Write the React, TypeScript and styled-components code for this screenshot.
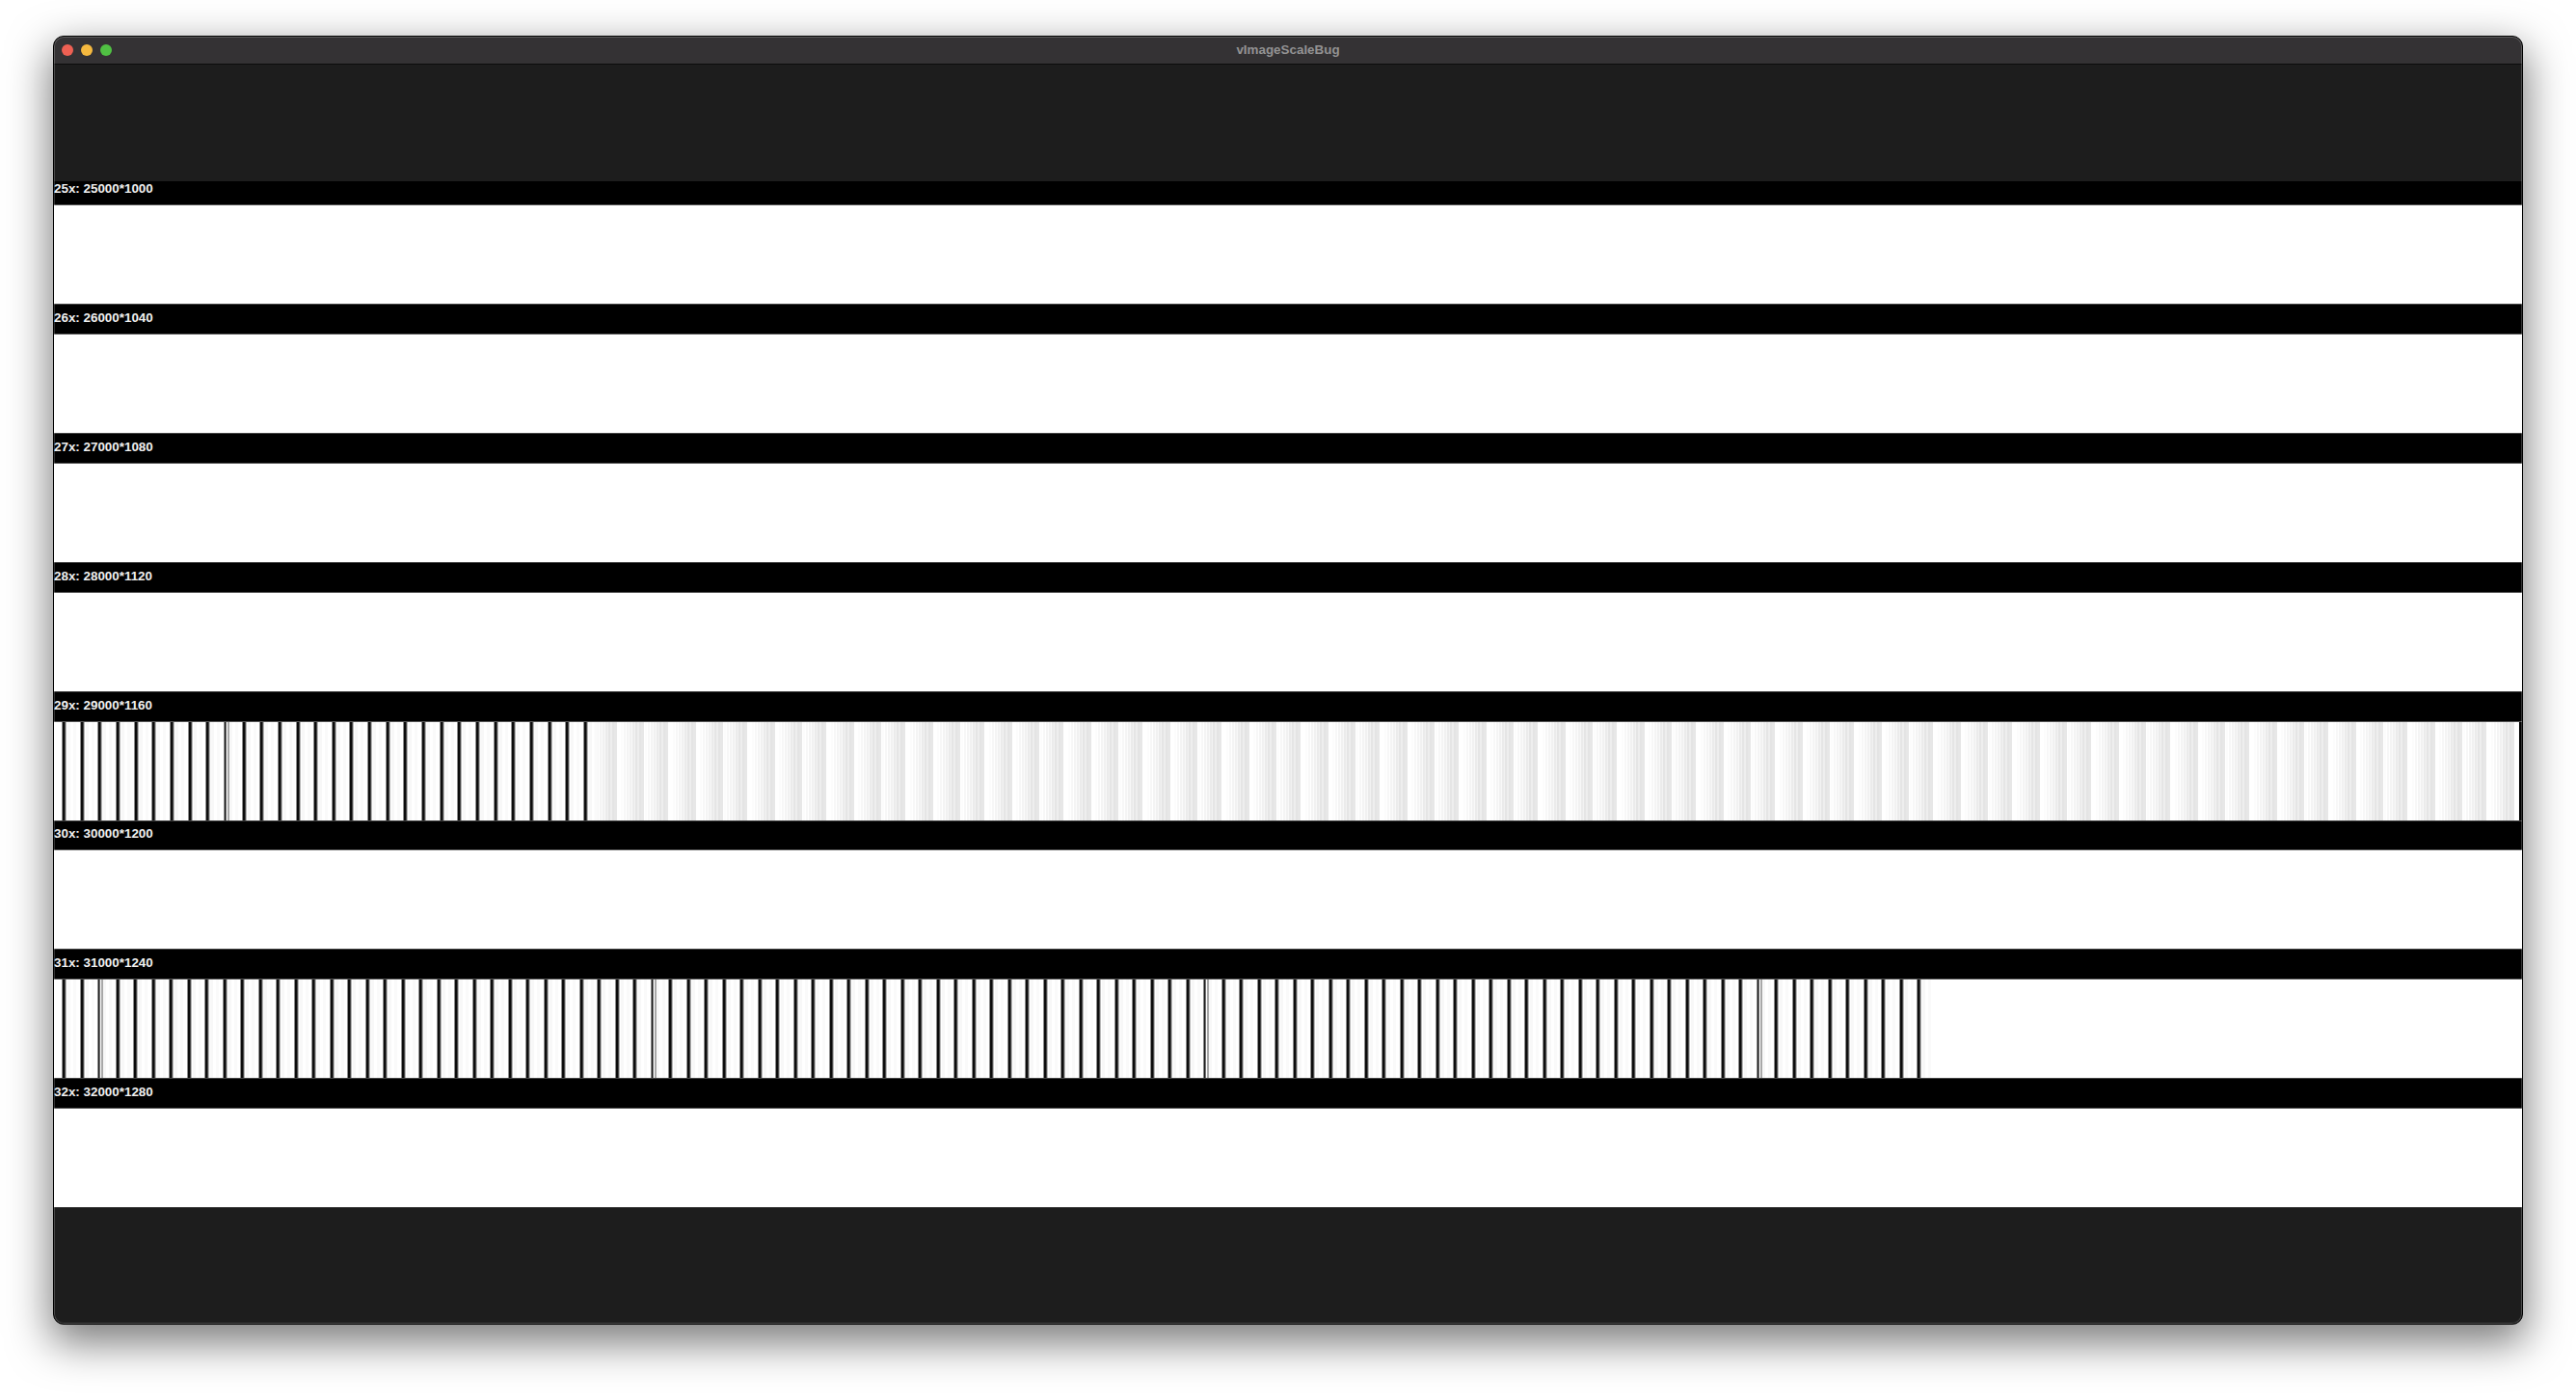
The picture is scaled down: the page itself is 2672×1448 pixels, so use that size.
import React from "react";
import styled, { createGlobalStyle } from "styled-components";

const Global = createGlobalStyle`
  html, body { margin: 0; padding: 0; background: #fff; overflow: hidden; }
  body { font-family: "Liberation Sans", Arial, sans-serif; }
`;

const Page = styled.div`
  width: 2672px;
  height: 1448px;
  padding: 37px 55px 0;
  box-sizing: border-box;
`;

const Window = styled.div`
  position: relative;
  width: 2562px;
  height: 1337px;
  box-sizing: border-box;
  border: 1px solid #000;
  border-radius: 11px;
  background: #1d1d1d;
  overflow: hidden;
  box-shadow: 0 16px 44px 3px rgba(0, 0, 0, 0.52);
  display: flex;
  flex-direction: column;
`;

const Rim = styled.div`
  position: absolute;
  inset: 0;
  border-radius: 10px;
  pointer-events: none;
  box-shadow: inset 0 0 0 1px rgba(255, 255, 255, 0.2);
`;

const TitleBar = styled.header`
  height: 29px;
  flex: none;
  box-sizing: border-box;
  display: grid;
  grid-template-columns: 1fr auto 1fr;
  align-items: center;
  padding: 0 8px;
  background: #343234;
  border-bottom: 1px solid #0c0c0c;
`;

const Lights = styled.div`
  display: flex;
  gap: 8px;
`;

const Light = styled.span<{ $color: string }>`
  width: 12px;
  height: 12px;
  border-radius: 50%;
  background: ${(p) => p.$color};
`;

const Title = styled.div`
  font-size: 13.4px;
  font-weight: 700;
  color: #939293;
  line-height: 16px;
`;

const Filler = styled.div<{ $height: number }>`
  flex: none;
  height: ${(p) => p.$height}px;
`;

const Label = styled.div<{ $height: number }>`
  flex: none;
  height: ${(p) => p.$height}px;
  box-sizing: border-box;
  background: #000;
  color: #f0f0f0;
  font-size: 13.4px;
  font-weight: 700;
  line-height: 16px;
  display: flex;
  align-items: flex-end;
  padding-bottom: 8px;
`;

const Picture = styled.div`
  flex: none;
  height: 104px;
  box-sizing: border-box;
  background: #fff;
  border-top: 1px solid #555;
  border-bottom: 1px solid #444;
  svg {
    display: block;
  }
`;

type Seg = { x: number; w: number; c: string };

const WIDTH = 2560;
const ORIGIN = 56;

function bars(count: number, period: number, doubles: number[]): Seg[] {
  const out: Seg[] = [];
  for (let i = 0; i < count; i++) {
    const x = Math.round(65 + period * i) - ORIGIN;
    out.push({ x: x + 5, w: 3, c: "#f8f8f8" });
    out.push({ x: x + 11, w: 3, c: "#fafafa" });
    if (doubles.includes(i)) {
      out.push({ x: x - 1, w: 1, c: "#888" });
      out.push({ x, w: 1, c: "#1c1c1c" });
      out.push({ x: x + 1, w: 1, c: "#777" });
      out.push({ x: x + 3, w: 2, c: "#a8a8a8" });
    } else {
      out.push({ x: x - 1, w: 1, c: "#8c8c8c" });
      out.push({ x, w: 2, c: "#0c0c0c" });
      out.push({ x: x + 2, w: 1, c: "#4a4a4a" });
      out.push({ x: x + 3, w: 1, c: "#b8b8b8" });
    }
  }
  return out;
}

const BAND: [number, number, string][] = [
  [-24, 2, "#fcfcfc"],
  [-21, 2, "#f7f7f7"],
  [-18, 2, "#f4f4f4"],
  [-16, 1, "#fbfbfb"],
  [-15, 2, "#f1f1f1"],
  [-13, 1, "#f8f8f8"],
  [-12, 2, "#ebebeb"],
  [-10, 1, "#f2f2f2"],
  [-9, 2, "#e5e5e5"],
  [-7, 2, "#eeeeee"],
  [-5, 2, "#e4e4e4"],
  [-3, 3, "#e7e7e7"],
];

function bands(): Seg[] {
  const out: Seg[] = [];
  const steps = [0, 28, 53.3];
  for (let k = 0; k < 25; k++) {
    for (const s of steps) {
      const end = Math.round(640 + 82 * k + s);
      BAND.forEach(([o, w, c]) => {
        out.push({ x: end + o - ORIGIN, w, c });
      });
    }
  }
  return out;
}

const Stripes = ({ segs, visible }: { segs: Seg[]; visible: number }) => (
  <svg width={WIDTH} height={102} viewBox={`0 0 ${WIDTH} 102`} shapeRendering="crispEdges">
    <rect x={visible} width={WIDTH - visible} height={102} fill="#000" />
    {segs
      .filter((s) => s.x < visible)
      .map((s, i) => (
        <rect key={i} x={s.x} width={Math.min(s.w, visible - s.x)} height={102} fill={s.c} />
      ))}
  </svg>
);

const rows: { name: string; gap: number; segs?: Seg[]; visible?: number }[] = [
  { name: "25x: 25000*1000", gap: 24 },
  { name: "26x: 26000*1040", gap: 30 },
  { name: "27x: 27000*1080", gap: 30 },
  { name: "28x: 28000*1120", gap: 30 },
  {
    name: "29x: 29000*1160",
    gap: 30,
    segs: [...bands(), ...bars(30, 18.655, [9])],
    visible: 2557,
  },
  { name: "30x: 30000*1200", gap: 29 },
  { name: "31x: 31000*1240", gap: 30, segs: bars(105, 18.5, [2, 33, 64, 95]), visible: WIDTH },
  { name: "32x: 32000*1280", gap: 30 },
];

export default function App() {
  return (
    <Page>
      <Global />
      <Window>
        <TitleBar>
          <Lights>
            <Light $color="#ee6053" />
            <Light $color="#f5b93f" />
            <Light $color="#50c143" />
          </Lights>
          <Title>vImageScaleBug</Title>
          <span />
        </TitleBar>
        <Filler $height={121} />
        {rows.map((r) => (
          <React.Fragment key={r.name}>
            <Label $height={r.gap}>{r.name}</Label>
            <Picture>{r.segs && <Stripes segs={r.segs} visible={r.visible ?? WIDTH} />}</Picture>
          </React.Fragment>
        ))}
        <Rim />
      </Window>
    </Page>
  );
}
